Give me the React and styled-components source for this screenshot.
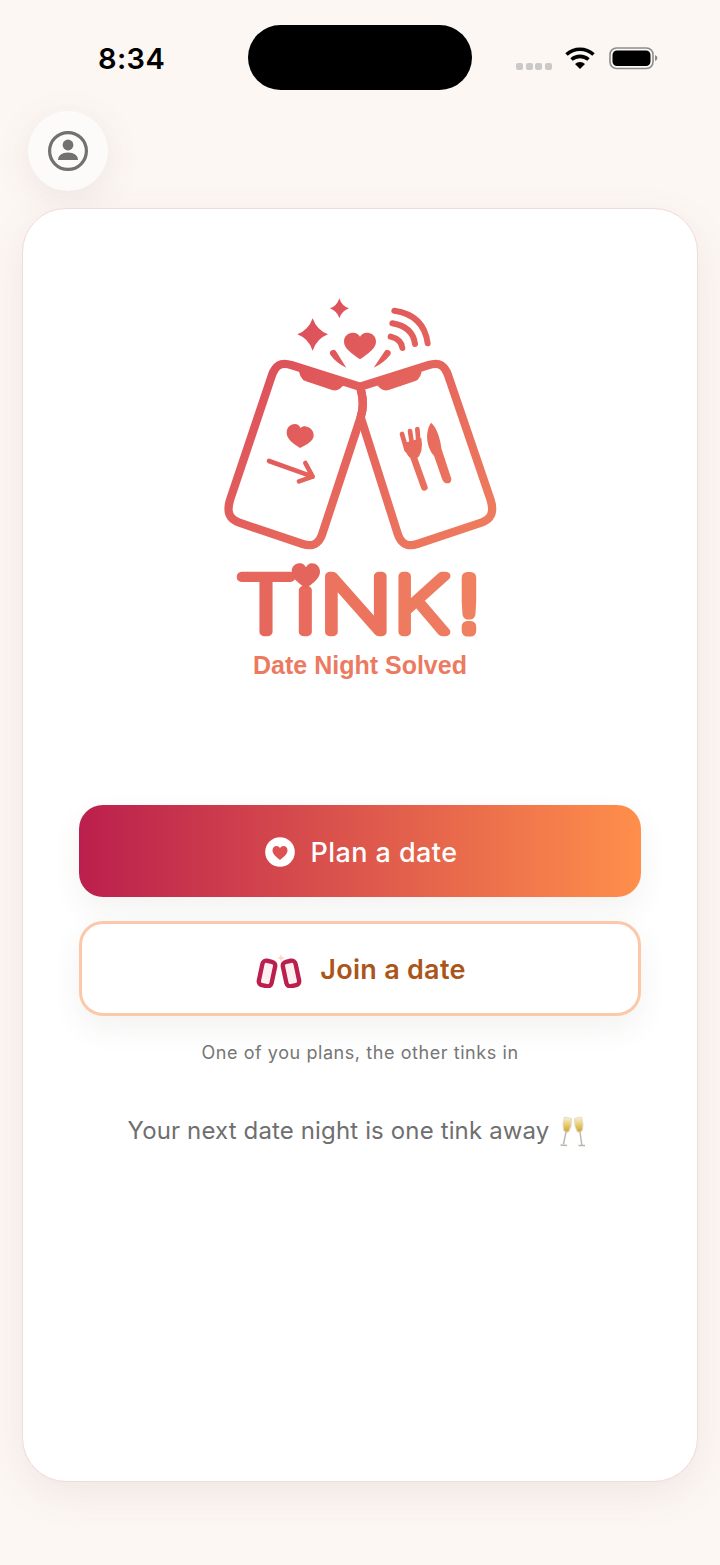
import React from "react";
import styled, { createGlobalStyle } from "styled-components";

const Global = createGlobalStyle`
  html, body { margin: 0; padding: 0; background: #fdf7f4; }
  body { font-family: Inter, "Liberation Sans", sans-serif; }
  * { box-sizing: border-box; }
`;

const Page = styled.div`
  width: 720px;
  height: 1565px;
  background: #fdf7f4;
  overflow: hidden;
`;

const StatusBar = styled.div`
  display: grid;
  grid-template-columns: 248px 224px 1fr;
  align-items: center;
  height: 65px;
  margin: 25px 0 21px;
`;

const Time = styled.div`
  padding-left: 98px;
  font-size: 29px;
  font-weight: 600;
  letter-spacing: 0.4px;
  color: #000;
  margin-top: 1px;
`;

const Island = styled.div`
  height: 65px;
  border-radius: 33px;
  background: #000;
`;

const StatusIcons = styled.div`
  display: flex;
  align-items: center;
  padding-left: 44px;
  margin-top: 1px;
`;

const Dots = styled.div`
  display: flex;
  gap: 2.6px;
  margin-top: 16px;
  margin-right: 13px;
`;

const Dot = styled.span`
  width: 7px;
  height: 7px;
  border-radius: 2px;
  background: #cbc9c8;
`;

const Wifi = styled.svg`
  width: 30px;
  height: 24px;
  margin-right: 14px;
`;

const Battery = styled.svg`
  width: 50px;
  height: 24px;
`;

const AvatarButton = styled.div`
  width: 80px;
  height: 80px;
  margin-left: 28px;
  border-radius: 50%;
  background: #fdfbf9;
  display: flex;
  align-items: center;
  justify-content: center;
  box-shadow: 0 8px 36px rgba(90, 70, 60, 0.1);
`;

const Card = styled.main`
  height: 1274px;
  margin: 17px 22px 0;
  padding: 71px 56px 0;
  background: #fff;
  border: 1px solid #f2d9dc;
  border-radius: 44px;
  box-shadow: 0 12px 40px rgba(90, 70, 60, 0.09);
  display: flex;
  flex-direction: column;
  align-items: center;
`;

const LogoSvg = styled.svg`
  width: 320px;
  height: 420px;
  flex: none;
  margin-bottom: 105px;
`;

const Actions = styled.div`
  width: 562px;
  display: flex;
  flex-direction: column;
  gap: 24px;
  flex: none;
`;

const ActionButton = styled.button`
  width: 100%;
  height: ${(p) => (p.$primary ? "92px" : "95px")};
  border-radius: 24px;
  border: ${(p) => (p.$primary ? "none" : "3px solid #fbc9aa")};
  background: ${(p) => (p.$primary ? "linear-gradient(90deg, #bb1f4d 0%, #ff8f4b 100%)" : "#fff")};
  color: ${(p) => (p.$primary ? "#fff" : "#aa561a")};
  font-family: Inter, "Liberation Sans", sans-serif;
  font-size: 27px;
  font-weight: ${(p) => (p.$primary ? 500 : 600)};
  letter-spacing: ${(p) => (p.$primary ? "0.42px" : "0.27px")};
  display: flex;
  align-items: center;
  justify-content: center;
  gap: ${(p) => (p.$primary ? "16px" : "18px")};
  padding: 2px 0 0 2px;
  box-shadow: 0 12px 30px rgba(90, 70, 60, 0.07);
`;

const Hint = styled.p`
  margin: 26px 0 0;
  font-size: 18px;
  line-height: 22px;
  color: #767676;
  letter-spacing: 0.57px;
`;

const Tagline = styled.p`
  margin: 50px 0 0;
  display: flex;
  align-items: center;
  gap: 11px;
  font-size: 24px;
  line-height: 34px;
  color: #6f6f6f;
  letter-spacing: 0.14px;
`;

const Glasses = styled.svg`
  width: 26px;
  height: 32px;
  margin-right: 6px;
`;

const WORDMARK = [
  { ch: "T", x: 108.5, sx: 1.26, color: "#e6675c" },
  { ch: "i", x: 285, sx: 1.25, color: "#e86b5d" },
  { ch: "N", x: 359, sx: 1.22, color: "#ec745e" },
  { ch: "K", x: 580, sx: 1.2, color: "#ee7b5f" },
];

function Logo() {
  const s = { stroke: "url(#g)", fill: "none", strokeLinecap: "round", strokeLinejoin: "round" };
  return (
    <LogoSvg viewBox="0 0 960 1260">
      <defs>
        <linearGradient id="g" gradientUnits="userSpaceOnUse" x1="100" y1="150" x2="900" y2="900">
          <stop offset="0" stopColor="#da4a5a" />
          <stop offset="1" stopColor="#f2835f" />
        </linearGradient>
      </defs>
      <path fill="url(#g)" d="M338 115Q350 150 384 163Q350 176 338 212Q326 176 292 163Q326 150 338 115Z" />
      <path fill="url(#g)" d="M418 55Q425 78 447 85Q425 93 418 115Q411 93 390 85Q411 78 418 55Z" />
      <path fill="url(#g)" d="M480 238C455 220 432 205 432 185C432 165 448 158 460 158C470 158 476 163 480 170C484 163 490 158 500 158C512 158 528 165 528 185C528 205 505 220 480 238Z" />
      <path fill="url(#g)" d="M391 224A10 10 0 0 1 409 215L439 263Q410 250 391 224Z" />
      <path fill="url(#g)" d="M571 224A10 10 0 0 0 553 215L521 263Q550 250 571 224Z" />
      <path {...s} strokeWidth="18" d="M572 170Q604 178 607 204" />
      <path {...s} strokeWidth="18" d="M577 130Q638 140 645 192" />
      <path {...s} strokeWidth="18" d="M583 92Q672 105 683 190" />
      <path {...s} strokeWidth="25" d="M480 320L276 256C240 244 226 258 216 285L90 660C78 700 90 718 118 728L308 792C340 802 356 790 366 764L482 412Q494 375 484 335Z" />
      <path {...s} strokeWidth="25" d="M480 320L684 256C720 244 734 258 744 285L872 660C884 700 872 718 844 728L652 792C620 802 604 790 594 764L482 412Q494 375 484 335Z" />
      <path fill="url(#g)" d="M296 260L445 306L430 316Q416 336 396 330L318 304Q296 296 296 260Z" />
      <path fill="url(#g)" d="M666 260L517 306L532 316Q546 336 566 330L644 304Q666 296 666 260Z" />
      <path fill="url(#g)" d="M300 504C280 490 260 478 260 458C260 440 274 432 284 432C293 432 298 437 302 444C307 438 314 438 320 440C334 444 342 454 341 468C339 484 320 494 300 504Z" />
      <path {...s} strokeWidth="14" d="M207 543L338 590M316 549L338 590L297 604" />
      <path {...s} strokeWidth="20" d="M640 530L673 622" />
      <path {...s} strokeWidth="14" d="M606 462L620 510M630 453L638 506M652 447L656 495" />
      <path fill="url(#g)" d="M610 490L664 474Q672 520 648 538Q620 542 610 490Z" />
      <path fill="url(#g)" d="M693 428C710 440 722 480 724 505L754 596Q754 610 742 610Q731 610 726 596L702 527C682 505 672 460 693 428Z" />
      {WORDMARK.map((l) => (
        <text
          key={l.ch}
          transform={`translate(${l.x} 1055) scale(${l.sx} 1)`}
          fontFamily="Inter, 'Liberation Sans', sans-serif"
          fontWeight="100"
          fontSize="230"
          fill={l.color}
          stroke={l.color}
          strokeWidth="26"
          strokeLinejoin="round"
          strokeLinecap="round"
        >
          {l.ch}
        </text>
      ))}
      <text
        x="763"
        y="1052"
        fontFamily="'DejaVu Sans', sans-serif"
        fontWeight="200"
        fontSize="220"
        fill="#f08160"
        stroke="#f08160"
        strokeWidth="33"
        strokeLinejoin="round"
      >
        !
      </text>
      <path fill="#e4655c" d="M318 925C298 910 275 895 275 875C275 857 288 850 300 850C310 850 314 855 318 862C322 855 326 850 336 850C348 850 360 860 360 875C360 895 338 910 318 925Z" />
      <text
        x="480"
        y="1182"
        textAnchor="middle"
        fontFamily="'Liberation Sans', sans-serif"
        fontSize="75"
        fontWeight="700"
        fill="#ec7a60"
      >
        Date Night Solved
      </text>
    </LogoSvg>
  );
}

export default function App() {
  return (
    <Page>
      <Global />
      <StatusBar>
        <Time>8:34</Time>
        <Island />
        <StatusIcons>
          <Dots>
            <Dot />
            <Dot />
            <Dot />
            <Dot />
          </Dots>
          <Wifi viewBox="0 0 30 24">
            <path d="M1.500 8.500A20 20 0 0 1 28.500 8.500" stroke="#000" strokeWidth="3.600" fill="none" />
            <path d="M6.500 13.500A13 13 0 0 1 23.500 13.500" stroke="#000" strokeWidth="3.600" fill="none" />
            <path d="M10 18L15 23L20 18A7 7 0 0 0 10 18Z" fill="#000" />
          </Wifi>
          <Battery viewBox="0 0 50 24">
            <rect x="1" y="2" width="43" height="20.500" rx="6.500" fill="none" stroke="#8d8d8d" strokeWidth="1.600" />
            <rect x="3.500" y="4.500" width="38" height="15.500" rx="4.500" fill="#000" />
            <path d="M46 9Q48.500 10 48.500 12Q48.500 14 46 15Z" fill="#8d8d8d" />
          </Battery>
        </StatusIcons>
      </StatusBar>
      <AvatarButton>
        <svg width="42" height="42" viewBox="0 0 42 42">
          <circle cx="21" cy="21" r="18.400" fill="none" stroke="#717171" strokeWidth="3.200" />
          <circle cx="21" cy="15" r="5.400" fill="#717171" />
          <path d="M11 30Q11.500 22.500 21 22.500Q30.500 22.500 31 30Z" fill="#717171" />
        </svg>
      </AvatarButton>
      <Card>
        <Logo />
        <Actions>
          <ActionButton $primary>
            <svg width="30" height="30" viewBox="0 0 30 30">
              <circle cx="15" cy="15" r="14.800" fill="#fff" />
              <path d="M15 23C10 19 7.500 16.500 7.500 13.200C7.500 10.500 9.500 9 11.500 9C13 9 14.300 9.800 15 11.200C15.700 9.800 17 9 18.500 9C20.500 9 22.500 10.500 22.500 13.200C22.500 16.500 20 19 15 23Z" fill="#dd5153" />
            </svg>
            Plan a date
          </ActionButton>
          <ActionButton>
            <svg width="46" height="36" viewBox="0 0 46 36">
              <path d="M25 2L26 5L29 6L26 7L25 10L24 7L21 6L24 5Z" fill="#fcd7c5" />
              <rect x="4.500" y="9" width="13" height="25" rx="4" fill="#fdf0f3" stroke="#bb1f4d" strokeWidth="4.400" transform="rotate(12 11 21.500)" />
              <rect x="28.500" y="9" width="13" height="25" rx="4" fill="#fdf0f3" stroke="#bb1f4d" strokeWidth="4.400" transform="rotate(-12 35 21.500)" />
            </svg>
            Join a date
          </ActionButton>
        </Actions>
        <Hint>One of you plans, the other tinks in</Hint>
        <Tagline>
          Your next date night is one tink away
          <Glasses viewBox="0 0 26 32">
            <defs>
              <linearGradient id="champagne" x1="0" y1="0" x2="0" y2="1">
                <stop offset="0" stopColor="#f8f3df" />
                <stop offset="0.35" stopColor="#efd98a" />
                <stop offset="1" stopColor="#cf9f2c" />
              </linearGradient>
            </defs>
            <path d="M4.500 2L11.500 3.500Q12 12 8.500 17Q5 18 3.500 15Q2 9 4.500 2Z" fill="url(#champagne)" stroke="#e2dccb" strokeWidth="1" />
            <path d="M21.500 2L14.500 3.500Q14 12 17.500 17Q21 18 22.500 15Q24 9 21.500 2Z" fill="url(#champagne)" stroke="#e2dccb" strokeWidth="1" />
            <path d="M6 17L3.500 29M0.500 30L7 30.500M20 17L21.800 30M18.500 30.500L25 30.500" stroke="#b9b5ad" strokeWidth="1.400" fill="none" />
          </Glasses>
        </Tagline>
      </Card>
    </Page>
  );
}
